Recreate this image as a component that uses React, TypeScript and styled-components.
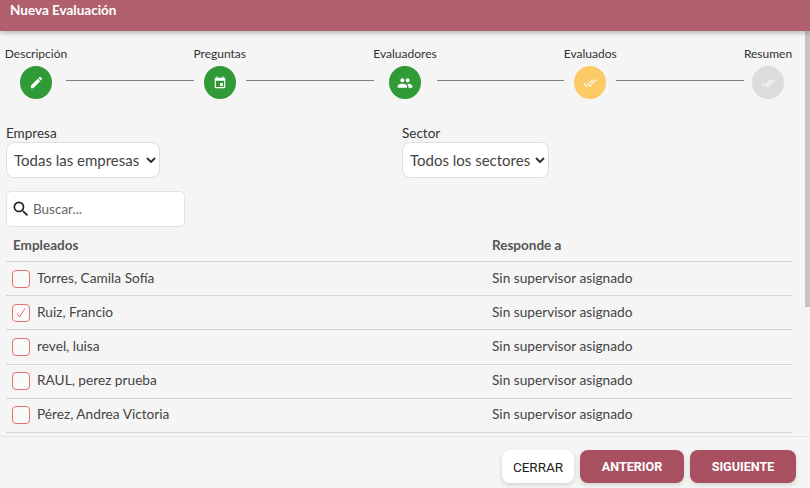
import * as React from 'react';
import styled, { createGlobalStyle } from 'styled-components';
import { MdEdit, MdEvent, MdPeople, MdDoneAll, MdSearch } from 'react-icons/md';

const Global = createGlobalStyle`
  html, body {
    margin: 0;
    padding: 0;
    height: 100%;
    overflow: hidden;
    background: #f5f5f5;
  }
  * { box-sizing: border-box; }
`;

const Modal = styled.div`
  position: relative;
  width: 810px;
  height: 488px;
  display: flex;
  flex-direction: column;
  background: #f5f5f5;
  font-family: Lato, "Liberation Sans", sans-serif;
  color: #333;
  overflow: hidden;
`;

const Header = styled.div`
  height: 31px;
  flex-shrink: 0;
  background: #b05f6d;
  color: #fff;
  padding: 2px 10px 0;
  font-size: 13.5px;
  line-height: 17px;
  font-weight: 700;
  box-shadow: 0 2px 5px rgba(0, 0, 0, 0.25);
  position: relative;
  z-index: 1;
`;

const Content = styled.div`
  flex: 1;
  padding: 16px 18px 0 6px;
  overflow: hidden;
`;

const Stepper = styled.div`
  display: flex;
  align-items: flex-start;
`;

const Step = styled.div<{ $width: number }>`
  width: ${(p) => p.$width}px;
  display: flex;
  flex-direction: column;
  align-items: center;
  flex-shrink: 0;
`;

const StepLabel = styled.div`
  font-size: 12px;
  line-height: 14px;
  color: #333;
  white-space: nowrap;
  margin-bottom: 5px;
`;

const Circle = styled.div<{ $color: string }>`
  width: 32px;
  height: 33px;
  border-radius: 50%;
  background: ${(p) => p.$color};
  color: #fff;
  display: flex;
  align-items: center;
  justify-content: center;
`;

const Connector = styled.div`
  flex: 1;
  height: 1px;
  background: #808080;
  margin-top: 33px;
`;

const Filters = styled.div`
  display: grid;
  grid-template-columns: 396px 1fr;
  margin-top: 26px;
`;

const Field = styled.div`
  display: flex;
  flex-direction: column;
  align-items: flex-start;
`;

const FieldLabel = styled.label`
  font-size: 13.5px;
  line-height: 16px;
  color: #333;
  margin-bottom: 1px;
`;

const chevron =
  "data:image/svg+xml,%3Csvg xmlns='http://www.w3.org/2000/svg' width='10' height='6' viewBox='0 0 10 6'%3E%3Cpath d='M1 1l4 4 4-4' fill='none' stroke='%23333' stroke-width='2'/%3E%3C/svg%3E";

const Select = styled.select<{ $width: number }>`
  width: ${(p) => p.$width}px;
  height: 36px;
  appearance: none;
  background: #fff url("${chevron}") no-repeat right 3px center;
  border: 1px solid #dedede;
  border-radius: 8px;
  padding: 0 14px 0 7px;
  font-family: inherit;
  font-size: 15px;
  color: #444;
`;

const SearchBox = styled.div`
  width: 179px;
  height: 36px;
  margin-top: 13px;
  display: flex;
  align-items: center;
  gap: 2px;
  padding: 0 4px;
  background: #fff;
  border: 1px solid #e2e2e2;
  border-radius: 5px;
  color: #222;
`;

const SearchInput = styled.input`
  border: 0;
  outline: 0;
  width: 130px;
  padding: 0;
  background: transparent;
  font-family: inherit;
  font-size: 13.5px;
  &::placeholder { color: #666; opacity: 1; }
`;

const Table = styled.div`
  margin-top: 2px;
`;

const Row = styled.div<{ $head?: boolean }>`
  display: grid;
  grid-template-columns: 486px 1fr;
  align-items: center;
  height: ${(p) => (p.$head ? '33px' : '34.2px')};
  border-bottom: 1px solid #d5d5d5;
  font-size: ${(p) => (p.$head ? '13.5px' : '13.7px')};
  color: ${(p) => (p.$head ? '#555' : '#444')};
  font-weight: ${(p) => (p.$head ? 700 : 400)};
`;

const NameCell = styled.div<{ $head?: boolean }>`
  display: flex;
  align-items: center;
  gap: 7px;
  padding-left: ${(p) => (p.$head ? '7px' : '6px')};
`;

const RowText = styled.span`
  padding-bottom: 3px;
`;

const Box = styled.div`
  width: 18px;
  height: 18px;
  border: 1px solid #e57373;
  border-radius: 4px;
  background: #fafafa;
  display: flex;
  align-items: center;
  justify-content: center;
`;

const Footer = styled.div`
  height: 52px;
  flex-shrink: 0;
  border-top: 1px solid #e3e6e9;
  display: flex;
  justify-content: flex-end;
  align-items: flex-start;
  gap: 6px;
  padding: 13px 14px 0 0;
`;

const Button = styled.button<{ $primary?: boolean; $width: number }>`
  width: ${(p) => p.$width}px;
  height: 33px;
  border: 0;
  border-radius: 8px;
  padding: 0;
  font-family: Roboto, sans-serif;
  font-size: ${(p) => (p.$primary ? '12.6px' : '13.5px')};
  font-weight: ${(p) => (p.$primary ? 700 : 400)};
  color: ${(p) => (p.$primary ? '#fff' : '#222')};
  background: ${(p) => (p.$primary ? '#a8505f' : '#fff')};
  box-shadow: 0 2px 5px rgba(0, 0, 0, 0.14);
`;

const ScrollThumb = styled.div`
  position: absolute;
  top: 31px;
  right: 0;
  width: 5px;
  height: 276px;
  background: #c4c4c4;
`;

const steps = [
  { label: 'Descripción', width: 60, color: '#309a36', icon: <MdEdit size={15} /> },
  { label: 'Preguntas', width: 52, color: '#309a36', icon: <MdEvent size={14} /> },
  { label: 'Evaluadores', width: 63, color: '#309a36', icon: <MdPeople size={16} /> },
  { label: 'Evaluados', width: 52, color: '#fdcb66', icon: <MdDoneAll size={14} /> },
  { label: 'Resumen', width: 48, color: '#dcdcdc', icon: <MdDoneAll size={14} /> },
];

const employees = [
  { name: 'Torres, Camila Sofía', checked: false },
  { name: 'Ruiz, Francio', checked: true },
  { name: 'revel, luisa', checked: false },
  { name: 'RAUL, perez prueba', checked: false },
  { name: 'Pérez, Andrea Victoria', checked: false },
];

export default function App() {
  return (
    <Modal>
      <Global />
      <Header>Nueva Evaluación</Header>
      <Content>
        <Stepper>
          {steps.map((s, i) => (
            <React.Fragment key={s.label}>
              {i > 0 && <Connector />}
              <Step $width={s.width}>
                <StepLabel>{s.label}</StepLabel>
                <Circle $color={s.color}>{s.icon}</Circle>
              </Step>
            </React.Fragment>
          ))}
        </Stepper>
        <Filters>
          <Field>
            <FieldLabel>Empresa</FieldLabel>
            <Select $width={154}>
              <option>Todas las empresas</option>
            </Select>
          </Field>
          <Field>
            <FieldLabel>Sector</FieldLabel>
            <Select $width={147}>
              <option>Todos los sectores</option>
            </Select>
          </Field>
        </Filters>
        <SearchBox>
          <MdSearch size={20} />
          <SearchInput placeholder="Buscar..." />
        </SearchBox>
        <Table>
          <Row $head>
            <NameCell $head>Empleados</NameCell>
            <div>Responde a</div>
          </Row>
          {employees.map((e) => (
            <Row key={e.name}>
              <NameCell>
                <Box>
                  {e.checked && (
                    <svg width="12" height="12" viewBox="0 0 12 12" fill="none" stroke="#e57373" strokeWidth="1">
                      <path d="M2 6.5 L4.5 10 L10 1.5" />
                    </svg>
                  )}
                </Box>
                <RowText>{e.name}</RowText>
              </NameCell>
              <RowText>Sin supervisor asignado</RowText>
            </Row>
          ))}
        </Table>
      </Content>
      <Footer>
        <Button $width={72}>CERRAR</Button>
        <Button $primary $width={104}>ANTERIOR</Button>
        <Button $primary $width={106}>SIGUIENTE</Button>
      </Footer>
      <ScrollThumb />
    </Modal>
  );
}
